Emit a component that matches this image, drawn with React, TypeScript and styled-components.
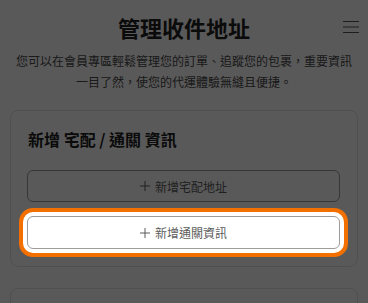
import React from 'react';
import styled, { createGlobalStyle } from 'styled-components';

const GlobalStyle = createGlobalStyle`
  html, body { margin: 0; padding: 0; background: #ffffff; }
  body {
    font-family: "Noto Sans CJK TC", "Noto Sans", sans-serif;
    color: #333;
    overflow: hidden;
  }
  * { box-sizing: border-box; }
`;

const Page = styled.div`
  height: 303px;
  overflow: hidden;
  padding: 12px 10px 0;
`;

const Header = styled.header`
  display: grid;
  grid-template-columns: 1fr auto 1fr;
  align-items: center;
  height: 30px;
`;

const Title = styled.h1`
  grid-column: 2;
  margin: 0;
  font-size: 22px;
  line-height: 30px;
  font-weight: 700;
  color: #222;
`;

const MenuButton = styled.button`
  justify-self: end;
  display: flex;
  padding: 0;
  margin-right: -2px;
  border: none;
  background: none;
  color: #555;
`;

const Intro = styled.p`
  margin: 8px 0 0;
  padding: 0 5px;
  font-size: 12px;
  line-height: 21px;
  text-align: center;
  color: #4a4a4a;
`;

const Card = styled.section<{ $stub?: boolean }>`
  margin-top: ${({ $stub }) => ($stub ? '21px' : '18px')};
  border: 1px solid #e2e2e2;
  border-radius: 8px;
  background: #fff;
  padding: ${({ $stub }) => ($stub ? '0' : '16px 17px 17px 16px')};
  min-height: ${({ $stub }) => ($stub ? '60px' : 'auto')};
`;

const CardTitle = styled.h2`
  margin: 0 0 19px 1px;
  font-size: 16px;
  line-height: 24px;
  font-weight: 700;
  color: #222;
`;

const Actions = styled.div`
  display: flex;
  flex-direction: column;
  gap: 14px;
`;

const AddButton = styled.button<{ $spotlight?: boolean }>`
  display: flex;
  align-items: center;
  justify-content: center;
  gap: 5px;
  width: 100%;
  height: ${({ $spotlight }) => ($spotlight ? '33px' : '32px')};
  border: 1px solid #9c9c9c;
  border-radius: 6px;
  background: #fff;
  font-family: inherit;
  font-size: 12px;
  color: #5c5c5c;
  position: relative;
  z-index: ${({ $spotlight }) => ($spotlight ? 10 : 'auto')};
  box-shadow: ${({ $spotlight }) =>
    $spotlight
      ? '0 0 0 4px #fff, 0 0 0 8px #f36f00, 0 0 0 9999px rgba(0, 0, 0, 0.65)'
      : 'none'};
`;

const PlusIcon = () => (
  <svg width="10" height="10" viewBox="0 0 10 10">
    <path d="M5 0v10M0 5h10" stroke="currentColor" strokeWidth="1" />
  </svg>
);

const MenuIcon = () => (
  <svg width="18" height="14" viewBox="0 0 18 14">
    <path d="M1 1.5h16M1 7h16M1 12.5h16" stroke="currentColor" strokeWidth="1.1" />
  </svg>
);

export default function App() {
  return (
    <>
      <GlobalStyle />
      <Page lang="zh-TW">
        <Header>
          <Title>管理收件地址</Title>
          <MenuButton aria-label="menu"><MenuIcon /></MenuButton>
        </Header>
        <Intro>
          您可以在會員專區輕鬆管理您的訂單、追蹤您的包裹，重要資訊一目了然，使您的代運體驗無縫且便捷。
        </Intro>
        <Card>
          <CardTitle>新增 宅配 / 通關 資訊</CardTitle>
          <Actions>
            <AddButton><PlusIcon />新增宅配地址</AddButton>
            <AddButton $spotlight><PlusIcon />新增通關資訊</AddButton>
          </Actions>
        </Card>
        <Card $stub />
      </Page>
    </>
  );
}
